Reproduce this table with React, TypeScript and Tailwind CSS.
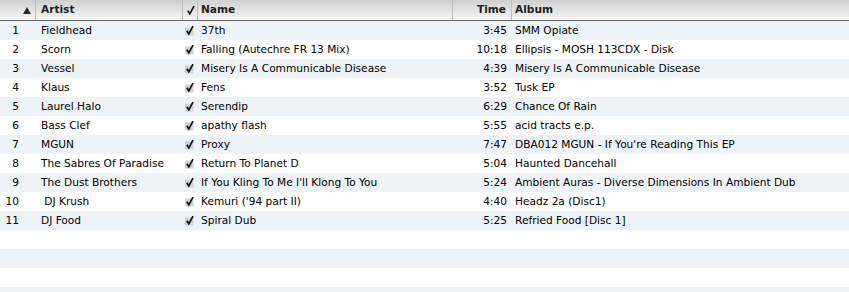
import React from "react";

const rows = [
  ["1", "Fieldhead", "37th", "3:45", "SMM Opiate"],
  ["2", "Scorn", "Falling (Autechre FR 13 Mix)", "10:18", "Ellipsis - MOSH 113CDX - Disk"],
  ["3", "Vessel", "Misery Is A Communicable Disease", "4:39", "Misery Is A Communicable Disease"],
  ["4", "Klaus", "Fens", "3:52", "Tusk EP"],
  ["5", "Laurel Halo", "Serendip", "6:29", "Chance Of Rain"],
  ["6", "Bass Clef", "apathy flash", "5:55", "acid tracts e.p."],
  ["7", "MGUN", "Proxy", "7:47", "DBA012 MGUN - If You're Reading This EP"],
  ["8", "The Sabres Of Paradise", "Return To Planet D", "5:04", "Haunted Dancehall"],
  ["9", "The Dust Brothers", "If You Kling To Me I'll Klong To You", "5:24", "Ambient Auras - Diverse Dimensions In Ambient Dub"],
  ["10", "\u00a0DJ Krush", "Kemuri ('94 part II)", "4:40", "Headz 2a (Disc1)"],
  ["11", "DJ Food", "Spiral Dub", "5:25", "Refried Food [Disc 1]"],
];

function Check({ box = true }: { box?: boolean }) {
  return (
    <svg width="10" height="11" viewBox="0 0 10 11" className="block">
      {box && <rect x="0" y="2.5" width="8.5" height="8" fill="#d2d2d2" />}
      <path d="M1.8 5.8 L3.8 8.8 L8 1.2" stroke="#111" strokeWidth="1.7" fill="none" />
    </svg>
  );
}

const grid = "grid grid-cols-[36px_147px_15px_255px_59px_1fr]";

export default function App() {
  return (
    <div
      className="w-[849px] h-[292px] overflow-hidden bg-white text-[10.6px] text-black"
      style={{ fontFamily: '"DejaVu Sans", sans-serif' }}
    >
      <div className={`${grid} h-[21px] border-b border-[#6b6b6b] bg-gradient-to-b from-[#d0d0d0] to-[#f6f6f6] font-bold text-[#1e1e1e]`}>
        <div className="flex items-center justify-end pr-[4px] border-r border-[#bdbdbd]">
          <svg width="8" height="7" viewBox="0 0 8 7"><path d="M4 0 L8 7 L0 7 Z" fill="#2a2a2a" /></svg>
        </div>
        <div className="flex items-center pl-[5px] border-r border-[#bdbdbd]">Artist</div>
        <div className="flex items-center pl-[3px] border-r border-[#bdbdbd]"><Check box={false} /></div>
        <div className="flex items-center pl-[3px] border-r border-[#bdbdbd]">Name</div>
        <div className="flex items-center justify-end pr-[5px] border-r border-[#bdbdbd]">Time</div>
        <div className="flex items-center pl-[3px]">Album</div>
      </div>
      {rows.map((r, i) => (
        <div key={i} className={`${grid} h-[19px] items-center whitespace-nowrap ${i % 2 === 0 ? "bg-[#eef3f8]" : "bg-white"}`}>
          <div className="text-right pr-[17px]">{r[0]}</div>
          <div className="pl-[5px] overflow-hidden">{r[1]}</div>
          <div className="pl-[2px] flex items-center"><Check /></div>
          <div className="pl-[3px] overflow-hidden">{r[2]}</div>
          <div className="text-right pr-[5px]">{r[3]}</div>
          <div className="pl-[3px] overflow-hidden">{r[4]}</div>
        </div>
      ))}
      {[0, 1, 2, 3].map((i) => (
        <div key={`e${i}`} className={`h-[19px] ${i % 2 === 0 ? "bg-white" : "bg-[#eef3f8]"}`} />
      ))}
    </div>
  );
}
